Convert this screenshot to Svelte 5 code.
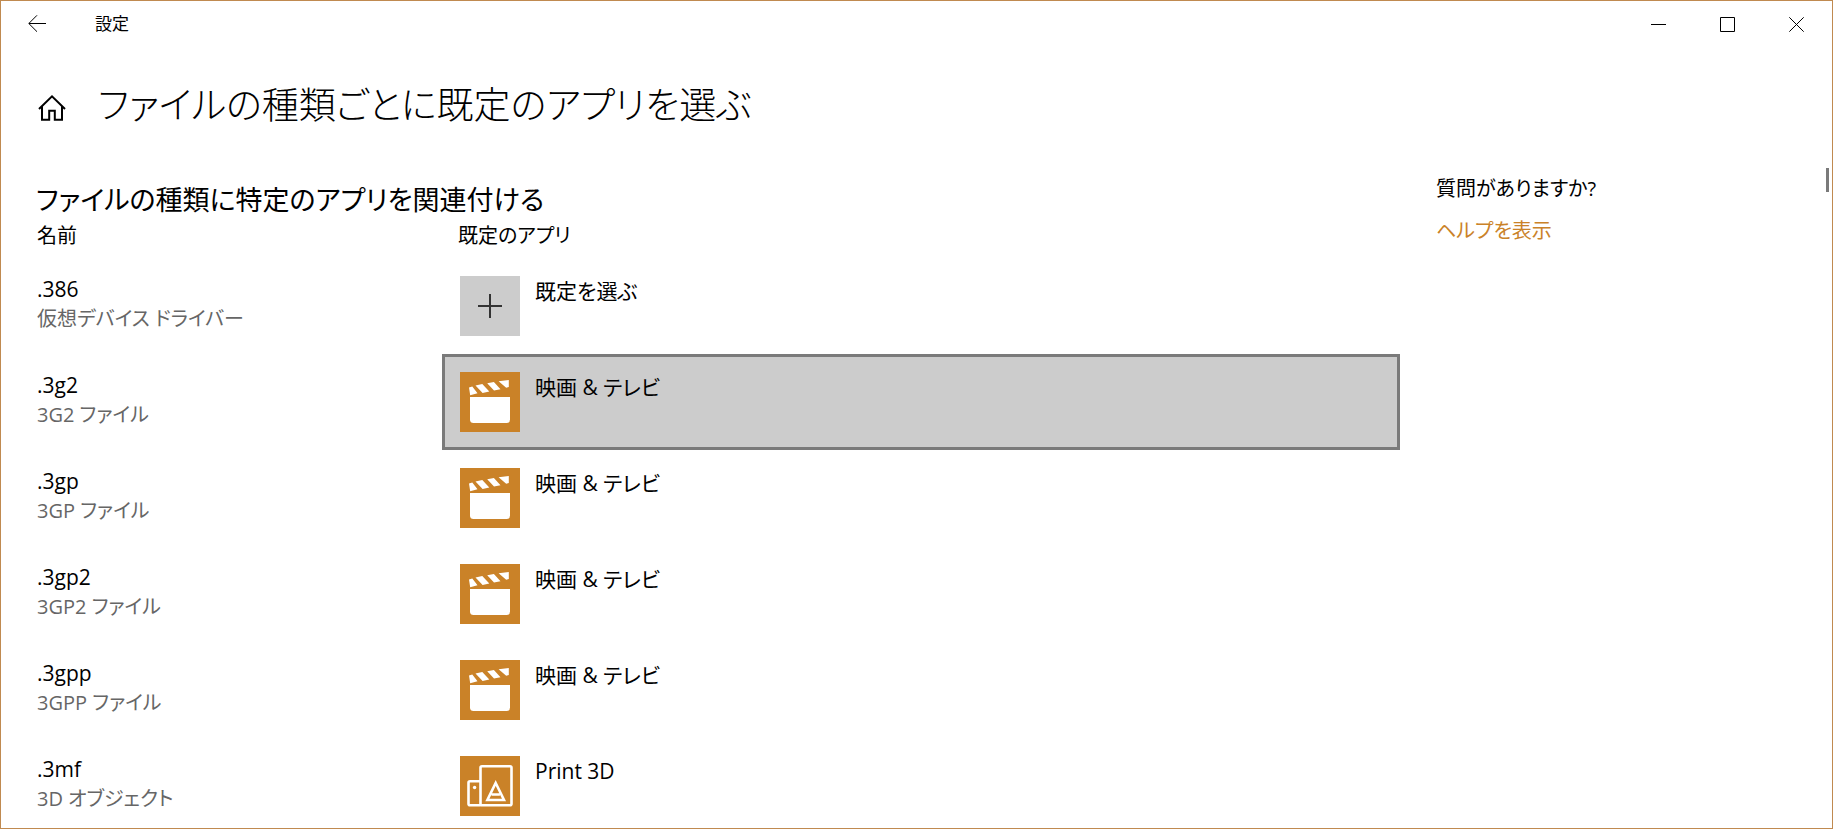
<script>
  const rows = [
    { ext: '.386', kind: '仮想デバイス ドライバー', app: '既定を選ぶ', icon: 'plus' },
    { ext: '.3g2', kind: '3G2 ファイル', app: '映画 & テレビ', icon: 'movie' },
    { ext: '.3gp', kind: '3GP ファイル', app: '映画 & テレビ', icon: 'movie' },
    { ext: '.3gp2', kind: '3GP2 ファイル', app: '映画 & テレビ', icon: 'movie' },
    { ext: '.3gpp', kind: '3GPP ファイル', app: '映画 & テレビ', icon: 'movie' },
    { ext: '.3mf', kind: '3D オブジェクト', app: 'Print 3D', icon: 'print' }
  ];
  let active = $state('.3g2');
</script>

<div class="window">
  <header class="titlebar">
    <button class="back" aria-label="戻る">
      <svg width="18" height="18" viewBox="0 0 18 18"><path d="M18 8.500H1M9 .3L.8 8.500L9 16.700" /></svg>
    </button>
    <span class="title">設定</span>
    <div class="controls">
      <button aria-label="最小化"><svg width="15" height="15" viewBox="0 0 15 15"><path d="M0 7.5H15" /></svg></button>
      <button aria-label="最大化"><svg width="15" height="15" viewBox="0 0 15 15"><path d="M.5 .5H14.5V14.5H.5Z" /></svg></button>
      <button aria-label="閉じる"><svg width="15" height="15" viewBox="0 0 15 15"><path d="M.3 .3L14.7 14.7M14.7 .3L.3 14.7" /></svg></button>
    </div>
  </header>

  <div class="heading">
    <button class="home" aria-label="ホーム">
      <svg width="28" height="26" viewBox="0 0 28 26"><path d="M1 14L14 1.4L27 14M4 11.5V24.8H11.2V15.8H16.8V24.8H24V11.5" /></svg>
    </button>
    <h1>ファイルの種類ごとに既定のアプリを選ぶ</h1>
  </div>

  <div class="body">
    <main>
      <h2>ファイルの種類に特定のアプリを関連付ける</h2>
      <table>
        <thead>
          <tr><th>名前</th><th>既定のアプリ</th></tr>
        </thead>
        <tbody>
          {#each rows as row}
            <tr>
              <td class="file">
                <div class="ext">{row.ext}</div>
                <div class="kind">{row.kind}</div>
              </td>
              <td>
                <button class="app" class:active={active === row.ext} onclick={() => (active = row.ext)}>
                  {#if row.icon === 'plus'}
                    <svg class="tile plain" viewBox="0 0 60 60"><path class="plus" d="M18 30H42M30 18V42" /></svg>
                  {:else if row.icon === 'movie'}
                    <svg class="tile" viewBox="0 0 60 60">
                      <path class="fill" d="M10 25H50V47.5Q50 51 46.500 51H13.500Q10 51 10 47.500Z" />
                      <path class="fill" d="M9 15.500L12.300 14.600L17.500 21.300L10.200 23.300ZM15.500 13.600L22.300 12L29.300 19.400L22.600 20.900ZM27.200 11.300L33.900 10L40.500 17.200L34 18.600ZM38.600 9.300L48.800 7.900V15L46.200 15.800Z" />
                    </svg>
                  {:else}
                    <svg class="tile" viewBox="0 0 60 60">
                      <rect class="line" x="20.500" y="10.300" width="31" height="39" rx="1.500" />
                      <path class="line" d="M20.500 25.300H10Q8.500 25.300 8.500 26.800V47.800Q8.500 49.300 10 49.300H20.500" />
                      <circle class="fill" cx="14.600" cy="31.500" r="1.700" />
                      <path class="line" d="M35.700 27L44 44H27.400ZM31.500 38.500H39.900" />
                    </svg>
                  {/if}
                  <span>{row.app}</span>
                </button>
              </td>
            </tr>
          {/each}
        </tbody>
      </table>
    </main>

    <aside>
      <p>質問がありますか?</p>
      <a href="#help">ヘルプを表示</a>
    </aside>
  </div>

  <div class="scrollbar"></div>
</div>

<style>
  :global(body) {
    margin: 0;
    background: #fff;
  }
  .window {
    position: relative;
    box-sizing: border-box;
    height: 100vh;
    overflow: hidden;
    border: 1px solid #c08a50;
    color: #000;
    font-family: 'Open Sans', 'Noto Sans CJK JP', sans-serif;
    font-size: 21px;
    line-height: 30px;
    font-feature-settings: 'palt';
  }
  button {
    padding: 0;
    border: 0;
    background: none;
    color: inherit;
    font: inherit;
    font-feature-settings: inherit;
  }
  svg {
    display: block;
    flex: none;
    fill: none;
    stroke: #000;
  }
  .titlebar {
    display: flex;
    align-items: center;
    height: 46px;
    padding-right: 1px;
  }
  .back {
    display: grid;
    place-items: center;
    width: 72px;
    height: 46px;
  }
  .title {
    flex: 1;
    padding-left: 22px;
    font-size: 17px;
    font-feature-settings: normal;
  }
  .controls {
    display: flex;
  }
  .controls button {
    display: grid;
    place-items: center;
    width: 69px;
    height: 46px;
  }
  .heading {
    display: flex;
    align-items: center;
    gap: 32px;
    padding: 28px 36px 0 37px;
  }
  .home {
    padding-top: 5px;
  }
  .home svg {
    stroke-width: 2;
  }
  h1 {
    margin: 0;
    font-size: 37px;
    line-height: 60px;
    font-weight: 300;
  }
  .body {
    display: grid;
    grid-template-columns: minmax(0, 1364px) minmax(0, 1fr);
    gap: 36px;
    padding: 45px 20px 0 35px;
  }
  h2 {
    margin: 0;
    font-size: 27px;
    line-height: 40px;
    font-weight: 400;
  }
  table {
    width: 100%;
    border-collapse: collapse;
    table-layout: fixed;
  }
  th {
    padding: 0 0 0 1px;
    font-size: 20px;
    font-weight: 400;
    text-align: left;
    line-height: 32px;
    height: 38px;
    vertical-align: top;
  }
  th:first-child {
    width: 405px;
  }
  th + th {
    padding-left: 16px;
  }
  td {
    padding: 0;
    height: 96px;
    vertical-align: top;
  }
  .file {
    padding-top: 16px;
    padding-left: 1px;
    height: 80px;
  }
  .kind {
    color: #666;
    font-size: 20px;
  }
  .app {
    display: flex;
    align-items: flex-start;
    gap: 15px;
    box-sizing: border-box;
    width: 100%;
    height: 96px;
    padding: 15px;
    border: 3px solid transparent;
    text-align: left;
  }
  .active {
    background: #ccc;
    border-color: #7a7a7a;
  }
  .tile {
    width: 60px;
    height: 60px;
    background: #ca8228;
  }
  .plain {
    background: #ccc;
  }
  .plus {
    stroke: #333;
    stroke-width: 2;
  }
  .fill {
    fill: #fff;
    stroke: none;
  }
  .line {
    stroke: #fff;
    stroke-width: 2.6;
  }
  aside {
    margin-top: -6px;
    font-size: 20px;
  }
  aside p {
    margin: 0 0 12px;
  }
  aside a {
    color: #ca8228;
    text-decoration: none;
  }
  .scrollbar {
    position: absolute;
    top: 167px;
    right: 3px;
    width: 3px;
    height: 24px;
    background: #7a7a7a;
  }
</style>
